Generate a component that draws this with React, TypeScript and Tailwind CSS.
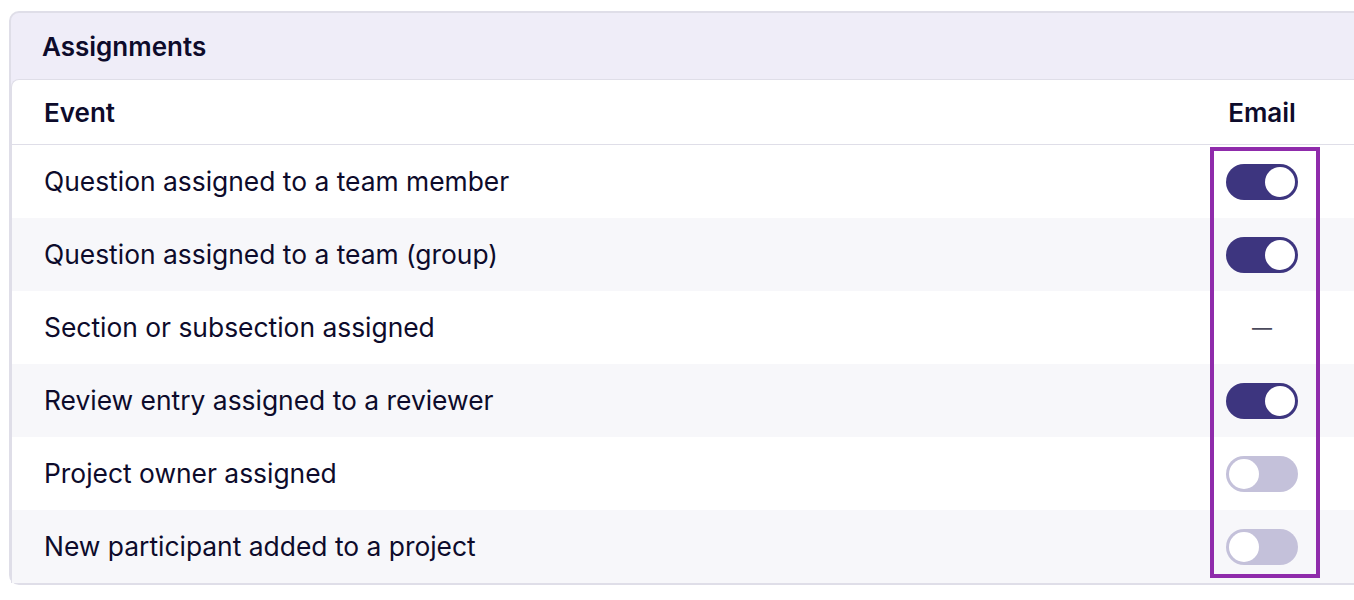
const rows: { label: string; email: "on" | "off" | "none" }[] = [
  { label: "Question assigned to a team member", email: "on" },
  { label: "Question assigned to a team (group)", email: "on" },
  { label: "Section or subsection assigned", email: "none" },
  { label: "Review entry assigned to a reviewer", email: "on" },
  { label: "Project owner assigned", email: "off" },
  { label: "New participant added to a project", email: "off" },
];

function Toggle({ on }: { on: boolean }) {
  return (
    <div
      className={`flex h-[36px] w-[72px] items-center rounded-full px-[3px] ${
        on ? "justify-end bg-[#3d357f]" : "justify-start bg-[#c4c1da]"
      }`}
    >
      <div className="h-[30px] w-[30px] rounded-full bg-white" />
    </div>
  );
}

export default function App() {
  return (
    <div
      className="h-[600px] w-[1354px] overflow-hidden bg-white pl-[9px] pt-[11px] text-[#0d0b2b]"
      style={{ fontFamily: "Inter, 'Noto Sans', sans-serif" }}
    >
      <div className="w-[1380px] rounded-[10px] border-2 border-[#dfdee8] bg-[#efedf8]">
        <div className="flex h-[66px] items-center pl-[31px] text-[26px] font-semibold">
          Assignments
        </div>
        <div className="rounded-tl-[8px] border-l border-t border-[#dfdee8] bg-white">
          <div className="flex h-[65px] items-center border-b border-[#dfdee8] pl-[32px] pr-[73px] text-[26px] font-semibold">
            <div className="flex-1">Event</div>
            <div className="w-[104px] text-center">Email</div>
          </div>
          <div className="relative">
            {rows.map((r, i) => (
              <div
                key={r.label}
                className={`flex h-[73px] items-center pl-[32px] pr-[73px] text-[26.4px] ${
                  i % 2 === 1 ? "bg-[#f7f7fa]" : "bg-white"
                }`}
              >
                <div className="flex-1">{r.label}</div>
                <div className="flex w-[104px] justify-center">
                  {r.email === "none" ? (
                    <span className="text-[20px] text-[#4b4a5c]">—</span>
                  ) : (
                    <Toggle on={r.email === "on"} />
                  )}
                </div>
              </div>
            ))}
            <div className="pointer-events-none absolute bottom-[5px] right-[67px] top-[2px] w-[110px] border-4 border-[#8f2bab]" />
          </div>
        </div>
      </div>
    </div>
  );
}
